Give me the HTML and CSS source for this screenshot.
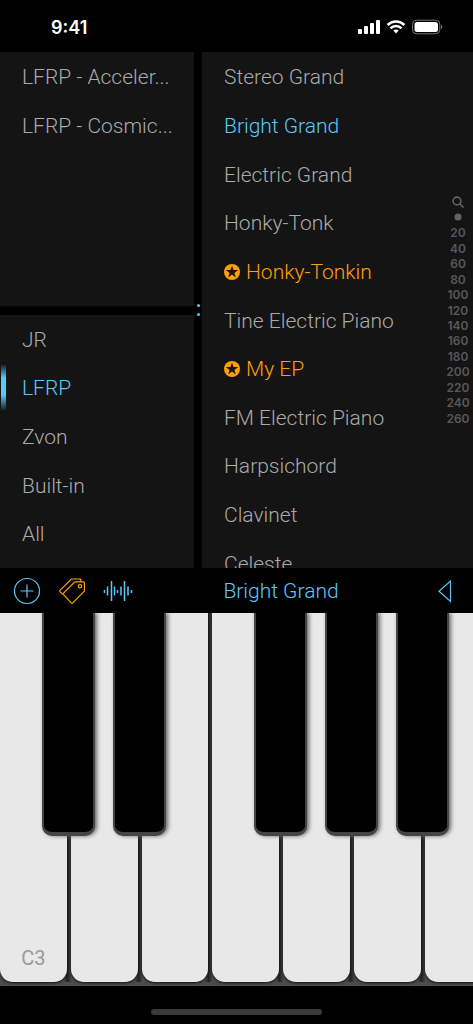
FILE: index.html
```
<!DOCTYPE html>
<html lang="en">
<head>
<meta charset="utf-8">
<meta name="viewport" content="width=device-width, initial-scale=1">
<title>Bright Grand</title>
<link rel="stylesheet" href="styles.css">
</head>
<body>
<div class="app">
  <header class="status">
    <time class="clock">9:41</time>
    <svg class="status-icons" width="86" height="18" viewBox="0 0 86 18" aria-hidden="true">
      <g fill="#fff">
        <rect x="1" y="11" width="4" height="5" rx="1"/>
        <rect x="7" y="8" width="4" height="8" rx="1"/>
        <rect x="13" y="5" width="4" height="11" rx="1"/>
        <rect x="19" y="2" width="4" height="14" rx="1"/>
        <path d="M36.3 12.6a4.2 4.2 0 0 1 5.4 0L39 15.6z"/>
        <rect x="57.5" y="4" width="23.5" height="10" rx="2.5"/>
      </g>
      <g fill="none" stroke="#fff" stroke-width="2.6">
        <path d="M30.6 7a11.9 11.9 0 0 1 16.8 0"/>
        <path d="M33.5 10.3a7.8 7.8 0 0 1 11 0"/>
      </g>
      <rect x="55.5" y="2.2" width="27.3" height="13.6" rx="4" fill="none" stroke="#777"/>
      <path d="M84 6.8v4.4c1.8-.7 1.8-3.7 0-4.4z" fill="#777"/>
    </svg>
  </header>

  <main class="browser">
    <div class="side">
      <section class="panel">
        <ul class="list list-two">
          <li><button type="button">LFRP - Acceler...</button></li>
          <li><button type="button">LFRP - Cosmic...</button></li>
        </ul>
      </section>
      <section class="panel">
        <ul class="list list-five">
          <li><button type="button">JR</button></li>
          <li class="current marked"><button type="button">LFRP</button></li>
          <li><button type="button">Zvon</button></li>
          <li><button type="button">Built-in</button></li>
          <li><button type="button">All</button></li>
        </ul>
      </section>
    </div>
    <div class="divider"><span></span><span></span></div>
    <section class="panel presets">
      <ul class="list list-eleven">
        <li><button type="button">Stereo Grand</button></li>
        <li class="current"><button type="button">Bright Grand</button></li>
        <li><button type="button">Electric Grand</button></li>
        <li><button type="button">Honky-Tonk</button></li>
        <li class="favorite"><button type="button"><svg class="star" viewBox="0 0 16 16" aria-hidden="true"><circle cx="8" cy="8" r="8"/><path d="M8 1.6 9.5 6.1 14.2 6.1 10.4 8.9 11.8 13.4 8 10.6 4.2 13.4 5.6 8.9 1.8 6.1 6.5 6.1z"/></svg>Honky-Tonkin</button></li>
        <li><button type="button">Tine Electric Piano</button></li>
        <li class="favorite"><button type="button"><svg class="star" viewBox="0 0 16 16" aria-hidden="true"><circle cx="8" cy="8" r="8"/><path d="M8 1.6 9.5 6.1 14.2 6.1 10.4 8.9 11.8 13.4 8 10.6 4.2 13.4 5.6 8.9 1.8 6.1 6.5 6.1z"/></svg>My EP</button></li>
        <li><button type="button">FM Electric Piano</button></li>
        <li><button type="button">Harpsichord</button></li>
        <li><button type="button">Clavinet</button></li>
        <li><button type="button">Celeste</button></li>
      </ul>
      <ol class="index">
        <li><svg width="12" height="12" viewBox="0 0 12 12" fill="none" stroke="#636366" stroke-width="1.6" aria-label="Search"><circle cx="5" cy="5" r="3.9"/><path d="M7.7 7.7 11.5 11.5"/></svg></li>
        <li><svg width="8" height="8" viewBox="0 0 8 8" aria-hidden="true"><circle cx="4" cy="4" r="3.5" fill="#636366"/></svg></li>
        <li>20</li><li>40</li><li>60</li><li>80</li><li>100</li><li>120</li><li>140</li><li>160</li><li>180</li><li>200</li><li>220</li><li>240</li><li>260</li>
      </ol>
    </section>
  </main>

  <nav class="toolbar">
    <button type="button" aria-label="Add"><svg width="28" height="28" viewBox="0 0 28 28" class="line"><circle cx="14" cy="14" r="12.5"/><path d="M14 7.5v13M7.5 14h13"/></svg></button>
    <button type="button" aria-label="Tags"><svg width="30" height="28" viewBox="-2 0 30 28" class="line tag"><path d="M15.8 4.9h8.6q1 0 1 1v8.2L13.6 26.1Q13 26.7 12.4 26.1L4.3 17.4Q3.8 16.8 4.3 16.3z"/><path d="M21.8 4.9V3q0-1-1-1H12.4L.9 13.4Q.3 14.1.9 14.7L4 17.4"/><circle cx="21" cy="9.3" r="1.7"/></svg></button>
    <button type="button" aria-label="Effects"><svg width="30" height="28" viewBox="0 0 30 28" class="line wave"><path d="M1.5 13v3M4.5 9.5v9M8.5 4v20M11.5 9.5v9M14.5 13v3M18 9.5v9M21.5 4v20M25 9.5v9M28.5 13v3"/></svg></button>
    <h1 class="title">Bright Grand</h1>
    <button type="button" class="back" aria-label="Show controls"><svg width="16" height="26" viewBox="0 0 16 26" class="line"><path d="M13.5 3v20.5L2 13.2z"/></svg></button>
  </nav>

  <section class="keyboard" aria-label="Keyboard">
    <div class="keys">
      <div class="slot"><button type="button" class="white">C3</button><button type="button" class="black" aria-label="C sharp"></button></div>
      <div class="slot"><button type="button" class="white" aria-label="D"></button><button type="button" class="black" aria-label="D sharp"></button></div>
      <div class="slot"><button type="button" class="white" aria-label="E"></button></div>
      <div class="slot"><button type="button" class="white" aria-label="F"></button><button type="button" class="black" aria-label="F sharp"></button></div>
      <div class="slot"><button type="button" class="white" aria-label="G"></button><button type="button" class="black" aria-label="G sharp"></button></div>
      <div class="slot"><button type="button" class="white" aria-label="A"></button><button type="button" class="black" aria-label="A sharp"></button></div>
      <div class="slot"><button type="button" class="white" aria-label="B"></button></div>
    </div>
  </section>
  <footer class="home"><span></span></footer>
</div>
</body>
</html>
```
FILE: styles.css
```
* { box-sizing: border-box; }

body {
  margin: 0;
  background: #000;
  color: #aaa;
  font-family: Roboto, "Liberation Sans", sans-serif;
  font-size: 21px;
  font-weight: 300;
}

button {
  margin: 0;
  padding: 0;
  border: 0;
  background: none;
  color: inherit;
  font: inherit;
}

svg { display: block; }

.app {
  display: grid;
  grid-template-rows: 52px minmax(0, 516fr) 45px minmax(0, 373fr) 38px;
  height: 100vh;
  overflow: hidden;
}

.status {
  display: flex;
  align-items: center;
  justify-content: space-between;
  padding: 2px 30px 0 51px;
}

.clock {
  color: #fff;
  font-family: Inter, sans-serif;
  font-size: 18px;
  font-weight: 600;
}

.browser {
  display: grid;
  grid-template-columns: 194fr 8px 271fr;
}

.side {
  display: grid;
  grid-template-rows: 1fr 1fr;
  gap: 9px;
  min-width: 0;
}

.panel {
  position: relative;
  min-height: 0;
  background: #141414;
  overflow: hidden;
}

.list {
  display: flex;
  flex-direction: column;
  margin: 0;
  padding: 0;
  list-style: none;
}

.list-two { height: 97px; }
.list-five { height: 243px; }
.list-eleven { height: 535px; }

.list li {
  position: relative;
  flex: 1;
}

.list button {
  display: flex;
  align-items: center;
  width: 100%;
  height: 100%;
  padding: 2px 0 0 22px;
  text-align: left;
  white-space: nowrap;
}

.current { color: #5ac8fa; }
.favorite { color: #ff9f0a; }

.marked::before {
  content: "";
  position: absolute;
  inset: 0 auto 0 1px;
  width: 5px;
  background: linear-gradient(#0a0a0a, #5ac8fa 30%, #5ac8fa 65%, #0a0a0a);
}

.star {
  width: 16px;
  height: 16px;
  margin-right: 6px;
  fill: #ff9f0a;
}

.star path { fill: #141414; }

.divider {
  display: flex;
  flex-direction: column;
  align-items: center;
  justify-content: center;
  gap: 6px;
}

.divider span {
  width: 3px;
  height: 3px;
  border-radius: 50%;
  background: #5ac8fa;
}

.index {
  position: absolute;
  top: 142px;
  right: 2px;
  display: flex;
  flex-direction: column;
  width: 26px;
  height: 232px;
  margin: 0;
  padding: 0;
  list-style: none;
  color: #58585a;
  font-family: Inter, sans-serif;
  font-size: 12px;
  font-weight: 600;
  line-height: 15px;
}

.index li {
  display: flex;
  flex: 1;
  align-items: center;
  justify-content: center;
}

.toolbar {
  display: grid;
  grid-template-columns: 28px 30px 30px 1fr 16px;
  align-items: center;
  column-gap: 16px;
  padding: 0 20px 0 13px;
}

.line {
  fill: none;
  stroke: #5ac8fa;
  stroke-width: 1.2;
}

.tag { stroke: #ff9f0a; }
.wave { stroke-width: 1.5; }

.title {
  margin: 0;
  padding-right: 8px;
  color: #5ac8fa;
  font-size: 21px;
  font-weight: 300;
  text-align: center;
}

.keyboard {
  padding-bottom: 4px;
  background: #4c4c4c;
  overflow: hidden;
}

.keys {
  display: grid;
  grid-template-columns: repeat(7, 1fr);
  width: 104.8%;
  height: 100%;
}

.slot {
  position: relative;
  padding-right: 4px;
  background: linear-gradient(90deg, #4c4c4c 90%, #222 95%, #444);
}

.white {
  display: flex;
  align-items: flex-end;
  justify-content: center;
  width: 100%;
  height: 100%;
  padding-bottom: 12px;
  border-radius: 0 0 13px 13px;
  background: #e8e8e8;
  box-shadow: 0 1px 3px #111;
  color: #999;
  font-size: 20px;
  font-weight: 400;
}

.black {
  position: absolute;
  z-index: 1;
  top: 0;
  left: 59%;
  width: 75%;
  height: 60.5%;
  border: solid #444;
  border-width: 0 2px 4px;
  border-radius: 0 0 10px 10px;
  background: #000;
  box-shadow: 2px 0 4px #666;
}

.home {
  display: flex;
  align-items: center;
  justify-content: center;
  padding-top: 14px;
}

.home span {
  width: 36%;
  height: 6px;
  border-radius: 3px;
  background: #3a3a3a;
}
```
